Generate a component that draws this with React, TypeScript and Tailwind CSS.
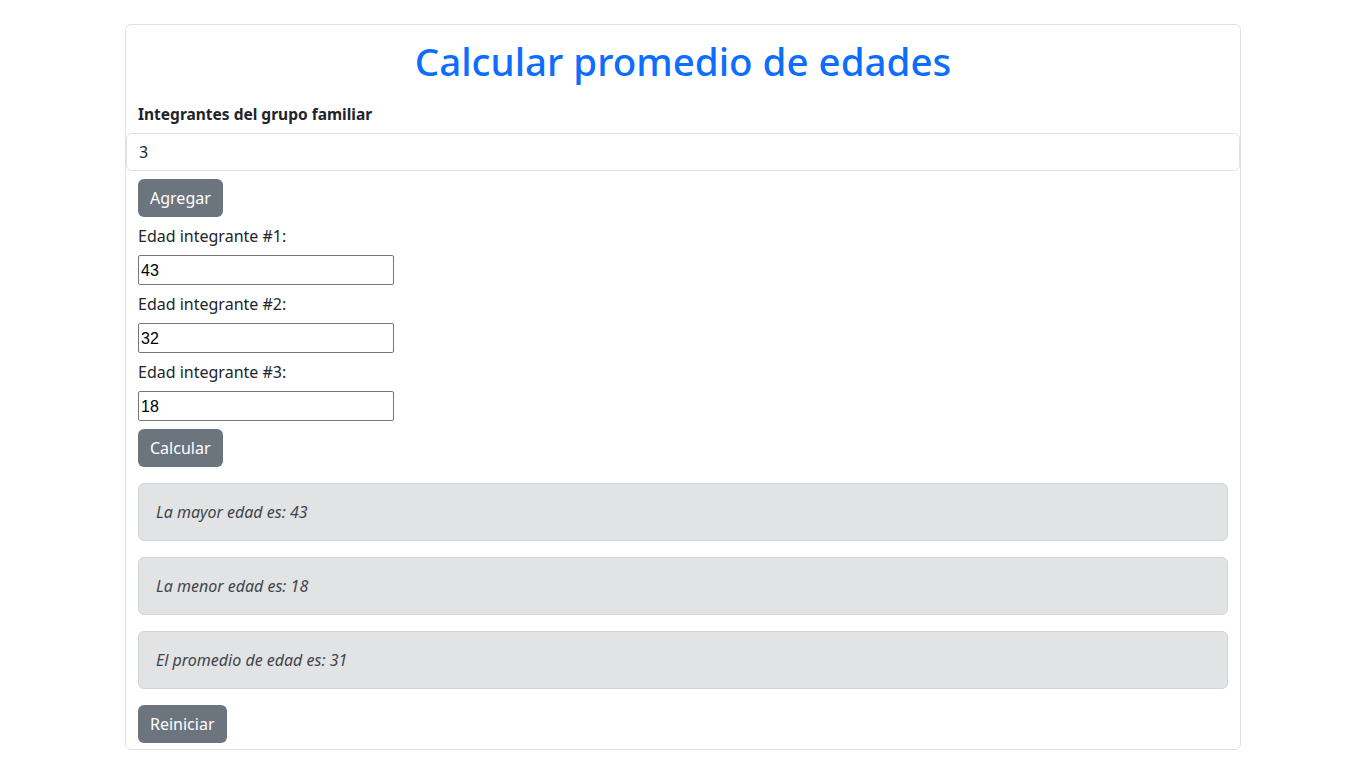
import React from "react";

const edades = [43, 32, 18];

const App = () => {
  return (
    <div className="min-h-screen bg-white pt-6 font-['Noto_Sans',sans-serif] text-base leading-6 text-[#212529]">
      <div className="mx-auto w-[1116px] rounded-md border border-[#dee2e6] pb-[6px]">
        <h1 className="mt-[12px] mb-[17px] text-center text-[38.5px] leading-[48px] font-medium text-[#0d6efd]">
          Calcular promedio de edades
        </h1>
        <label className="mb-[7px] block px-3 text-[15.5px] font-bold">Integrantes del grupo familiar</label>
        <input
          readOnly
          value="3"
          className="block h-[38px] w-full rounded-md border border-[#dee2e6] px-3 text-base text-[#212529] outline-none"
        />
        <div className="px-3">
          {/* Agregar */}
          <button className="mt-2 h-[38px] rounded-md bg-[#6c757d] px-3 text-white">Agregar</button>

          {edades.map((e, i) => (
            <div key={i}>
              <div className="mt-[7px] mb-[7px]">Edad integrante #{i + 1}:</div>
              <input
                readOnly
                value={e}
                className="block h-[30px] w-64 rounded-[2px] border border-[#767676] px-[2px] pt-[1px] font-['Liberation_Sans',sans-serif] text-base text-black outline-none"
              />
            </div>
          ))}

          <button className="mt-2 h-[38px] rounded-md bg-[#6c757d] px-3 text-white">Calcular</button>

          <div className="mt-4 flex flex-col gap-4">
            <div className="rounded-md border border-[#d3d6d8] bg-[#e2e3e5] py-4 pr-4 pl-[17px] italic text-[#41464b]">La mayor edad es: 43</div>
            <div className="rounded-md border border-[#d3d6d8] bg-[#e2e3e5] py-4 pr-4 pl-[17px] italic text-[#41464b]">La menor edad es: 18</div>
            <div className="rounded-md border border-[#d3d6d8] bg-[#e2e3e5] py-4 pr-4 pl-[17px] italic text-[#41464b]">El promedio de edad es: 31</div>
          </div>

          <button className="mt-4 h-[38px] rounded-md bg-[#6c757d] px-3 text-white">Reiniciar</button>
        </div>
      </div>
    </div>
  );
};

export default App;
